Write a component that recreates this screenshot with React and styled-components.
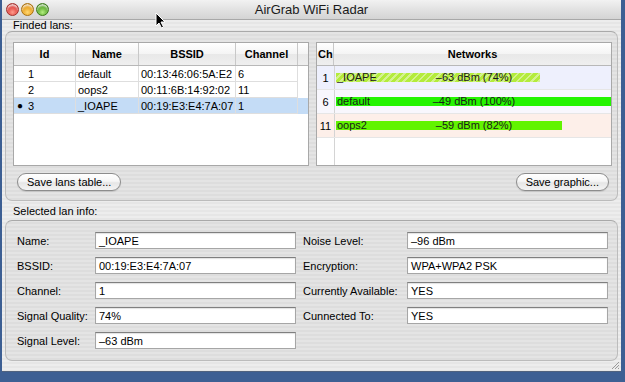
import React from "react";
import styled, { createGlobalStyle } from "styled-components";

const GlobalStyle = createGlobalStyle`
  html, body {
    margin: 0;
    padding: 0;
    background: #3d5f93;
  }
  body {
    font-family: "Liberation Sans", Arial, sans-serif;
    font-size: 11px;
    color: #000;
  }
`;

const Desktop = styled.div`
  width: 625px;
  height: 382px;
  padding-left: 2px;
  box-sizing: border-box;
  position: relative;
`;

const Window = styled.div`
  width: 619px;
  height: 372px;
  display: flex;
  flex-direction: column;
  background: repeating-linear-gradient(
    to bottom,
    #ededed 0px,
    #ededed 2px,
    #e6e6e6 2px,
    #e6e6e6 4px
  );
  border-bottom: 1px solid #50627e;
  box-sizing: border-box;
  position: relative;
`;

const TitleBar = styled.div`
  height: 20px;
  flex: none;
  display: flex;
  align-items: center;
  position: relative;
  background: linear-gradient(to bottom, #f2f2f2 0%, #e2e2e2 50%, #d4d4d4 100%);
  border-bottom: 1px solid #a8a8a8;
  box-sizing: border-box;
`;

const Lights = styled.div`
  display: flex;
  gap: 2px;
  padding-left: 4px;
`;

const Light = styled.span`
  width: 13px;
  height: 13px;
  border-radius: 50%;
  box-sizing: border-box;
  border: 1px solid ${(p) => p.$edge};
  background: radial-gradient(
    circle at 50% 75%,
    ${(p) => p.$glow} 0%,
    ${(p) => p.$color} 55%,
    ${(p) => p.$edge} 100%
  );
  box-shadow: inset 0 2px 2px rgba(255, 255, 255, 0.75);
`;

const Title = styled.div`
  position: absolute;
  left: 0;
  right: 0;
  text-align: center;
  font-size: 13px;
  color: #1a1a1a;
  pointer-events: none;
`;

const SectionLabel = styled.div`
  height: 11px;
  line-height: 11px;
  padding-left: 11px;
  margin-top: ${(p) => p.$top || 0}px;
  font-size: 11px;
`;

const GroupBox = styled.div`
  margin: ${(p) => p.$top || 0}px 3px 0 3px;
  height: ${(p) => p.$height}px;
  box-sizing: border-box;
  border: 1px solid #bcbcbc;
  border-top-color: #a9a9a9;
  border-radius: 7px;
  background: rgba(0, 0, 0, 0.035);
  padding: ${(p) => p.$pad};
  display: flex;
  flex-direction: column;
`;

const TablesRow = styled.div`
  display: flex;
  gap: 7px;
  height: 124px;
`;

const TableView = styled.div`
  width: 296px;
  height: 124px;
  box-sizing: border-box;
  border: 1px solid #a8a8a8;
  background: #fff;
  display: flex;
  flex-direction: column;
  overflow: hidden;
`;

const HeaderRow = styled.div`
  display: flex;
  height: 23px;
  flex: none;
  background: linear-gradient(to bottom, #ffffff 0%, #f4f4f4 50%, #e8e8e8 51%, #efefef 100%);
  border-bottom: 1px solid #b8b8b8;
  box-sizing: border-box;
`;

const HeaderCell = styled.div`
  width: ${(p) => (p.$w ? `${p.$w}px` : "auto")};
  flex: ${(p) => (p.$w ? "none" : "1")};
  display: flex;
  align-items: center;
  justify-content: ${(p) => p.$align || "center"};
  padding-left: ${(p) => p.$pl || 0}px;
  box-sizing: border-box;
  font-weight: bold;
  font-size: 11px;
  border-right: ${(p) => (p.$last ? "none" : "1px solid #c8c8c8")};
`;

const LanRow = styled.div`
  display: flex;
  height: 16px;
  background: ${(p) => (p.$selected ? "#c4dcf6" : "#fff")};
`;

const LanCell = styled.div`
  width: ${(p) => p.$w}px;
  flex: none;
  box-sizing: border-box;
  display: flex;
  align-items: center;
  padding-left: ${(p) => p.$pl || 2}px;
  border-right: 1px solid #dedede;
  border-bottom: 1px solid #dedede;
  white-space: nowrap;
  overflow: hidden;
`;

const Bullet = styled.span`
  width: 11px;
  font-size: 10px;
  visibility: ${(p) => (p.$on ? "visible" : "hidden")};
`;

const NetRow = styled.div`
  display: flex;
  height: 24px;
  background: ${(p) => p.$bg};
  border-bottom: 1px solid #e6e6e6;
  box-sizing: border-box;
`;

const ChCell = styled.div`
  width: 17px;
  flex: none;
  display: flex;
  align-items: center;
  justify-content: center;
  border-right: 1px solid #d4d4d4;
  font-size: 11px;
`;

const NetCell = styled.div`
  flex: 1;
  display: flex;
  align-items: center;
  padding-left: 1px;
`;

const Track = styled.div`
  width: 275px;
  height: 9px;
  display: grid;
  font-size: 11px;
  line-height: 9px;
`;

const Bar = styled.div`
  grid-area: 1 / 1;
  height: 9px;
  justify-self: start;
  background: ${(p) =>
    p.$hatched
      ? "repeating-linear-gradient(135deg, #b4ec3c 0px, #b4ec3c 3px, #d4f28e 3px, #d4f28e 5px)"
      : p.$color};
`;

const BarText = styled.div`
  grid-area: 1 / 1;
  display: grid;
  grid-template-columns: 1fr auto 1fr;
  align-items: center;
  color: #1a1a1a;
  padding-left: 1px;
  white-space: nowrap;
`;

const Filler = styled.div`
  flex: 1;
  display: flex;
`;

const FillerCh = styled.div`
  width: 17px;
  border-right: 1px solid #d4d4d4;
`;

const ButtonsRow = styled.div`
  display: flex;
  justify-content: space-between;
  padding: 0 3px 0 4px;
  margin-top: 7px;
`;

const Button = styled.div`
  height: 18px;
  box-sizing: border-box;
  padding: 0 9px;
  display: flex;
  align-items: center;
  border: 1px solid #8c8c8c;
  border-radius: 9px;
  background: linear-gradient(to bottom, #ffffff 0%, #f6f6f6 45%, #e6e6e6 55%, #f4f4f4 100%);
  box-shadow: 0 1px 1px rgba(0, 0, 0, 0.12);
  font-size: 11px;
`;

const Form = styled.div`
  display: grid;
  grid-template-columns: 279px 305px;
  column-gap: 7px;
  row-gap: 8px;
`;

const Field = styled.div`
  display: flex;
  align-items: center;
  height: 17px;
`;

const Label = styled.div`
  width: ${(p) => p.$w}px;
  flex: none;
  font-size: 11px;
  white-space: nowrap;
`;

const Input = styled.div`
  width: 201px;
  height: 17px;
  box-sizing: border-box;
  background: #fff;
  border: 1px solid #a6a6a6;
  border-top-color: #7f7f7f;
  box-shadow: inset 0 1px 1px rgba(0, 0, 0, 0.12);
  padding-left: 3px;
  display: flex;
  align-items: center;
  font-size: 11px;
`;

const BottomStrip = styled.div`
  flex: 1;
  display: flex;
  justify-content: flex-end;
  align-items: flex-end;
  padding: 0 1px 1px 0;
`;

const Cursor = styled.svg`
  position: absolute;
  left: 153px;
  top: 12px;
`;

const lans = [
  { id: 1, name: "default", bssid: "00:13:46:06:5A:E2", ch: 6 },
  { id: 2, name: "oops2", bssid: "00:11:6B:14:92:02", ch: 11 },
  { id: 3, name: "_IOAPE", bssid: "00:19:E3:E4:7A:07", ch: 1, selected: true },
];

const networks = [
  { ch: 1, name: "_IOAPE", dbm: -63, pct: 74, bg: "#eef0fd", hatched: true },
  { ch: 6, name: "default", dbm: -49, pct: 100, bg: "#f8f7fd", color: "#24f400" },
  { ch: 11, name: "oops2", dbm: -59, pct: 82, bg: "#fdefe9", color: "#62f400" },
];

const leftInfo = [
  ["Name:", "_IOAPE"],
  ["BSSID:", "00:19:E3:E4:7A:07"],
  ["Channel:", "1"],
  ["Signal Quality:", "74%"],
  ["Signal Level:", "\u201363 dBm"],
];

const rightInfo = [
  ["Noise Level:", "\u201396 dBm"],
  ["Encryption:", "WPA+WPA2 PSK"],
  ["Currently Available:", "YES"],
  ["Cunnected To:", "YES"],
];

const cols = [62, 63, 97, 62];

const App = () => {
  const rows = [];
  for (let i = 0; i < leftInfo.length; i++) {
    rows.push(
      <Field key={`l${i}`}>
        <Label $w={78}>{leftInfo[i][0]}</Label>
        <Input>{leftInfo[i][1]}</Input>
      </Field>
    );
    rows.push(
      rightInfo[i] ? (
        <Field key={`r${i}`}>
          <Label $w={104}>{rightInfo[i][0]}</Label>
          <Input>{rightInfo[i][1]}</Input>
        </Field>
      ) : (
        <div key={`r${i}`} />
      )
    );
  }

  return (
    <Desktop>
      <GlobalStyle />
      <Window>
        <TitleBar>
          <Lights>
            <Light $color="#e0443e" $glow="#ff9c8c" $edge="#a3302b" />
            <Light $color="#e8a01c" $glow="#ffd873" $edge="#a9700f" />
            <Light $color="#5aaa2a" $glow="#b4ee82" $edge="#3c7a1b" />
          </Lights>
          <Title>AirGrab WiFi Radar</Title>
        </TitleBar>

        <SectionLabel>Finded lans:</SectionLabel>
        <GroupBox $height={172} $pad="10px 5px 0 7px">
          <TablesRow>
            <TableView>
              <HeaderRow>
                <HeaderCell $w={cols[0]}>Id</HeaderCell>
                <HeaderCell $w={cols[1]}>Name</HeaderCell>
                <HeaderCell $w={cols[2]}>BSSID</HeaderCell>
                <HeaderCell $w={cols[3]}>Channel</HeaderCell>
                <HeaderCell $last />
              </HeaderRow>
              {lans.map((l) => (
                <LanRow key={l.id} $selected={l.selected}>
                  <LanCell $w={cols[0]} $pl={3}>
                    <Bullet $on={l.selected}>●</Bullet>
                    {l.id}
                  </LanCell>
                  <LanCell $w={cols[1]}>{l.name}</LanCell>
                  <LanCell $w={cols[2]}>{l.bssid}</LanCell>
                  <LanCell $w={cols[3]}>{l.ch}</LanCell>
                </LanRow>
              ))}
            </TableView>

            <TableView>
              <HeaderRow>
                <HeaderCell $w={17} $align="flex-start" $pl={1}>
                  Ch
                </HeaderCell>
                <HeaderCell $last>Networks</HeaderCell>
              </HeaderRow>
              {networks.map((n) => (
                <NetRow key={n.ch} $bg={n.bg}>
                  <ChCell>{n.ch}</ChCell>
                  <NetCell>
                    <Track>
                      <Bar
                        $hatched={n.hatched}
                        $color={n.color}
                        style={{ width: `${(n.pct / 100) * 275}px` }}
                      />
                      <BarText>
                        <span>{n.name}</span>
                        <span>
                          {"\u2013"}
                          {Math.abs(n.dbm)} dBm ({n.pct}%)
                        </span>
                        <span />
                      </BarText>
                    </Track>
                  </NetCell>
                </NetRow>
              ))}
              <Filler>
                <FillerCh />
              </Filler>
            </TableView>
          </TablesRow>
          <ButtonsRow>
            <Button>Save lans table...</Button>
            <Button>Save graphic...</Button>
          </ButtonsRow>
        </GroupBox>

        <SectionLabel $top={5}>Selected lan info:</SectionLabel>
        <GroupBox $top={3} $height={142} $pad="11px 9px 0 11px">
          <Form>{rows}</Form>
        </GroupBox>

        <BottomStrip>
          <svg width="9" height="9" viewBox="0 0 9 9">
            <path d="M8 1 L1 8 M8 4 L4 8 M8 7 L7 8" stroke="#9a9a9a" strokeWidth="1" />
          </svg>
        </BottomStrip>

        <Cursor width="11" height="17" viewBox="0 0 11 17">
          <path
            d="M1 1 L1 14 L4 11 L6.5 16 L8.5 15 L6 10 L10 10 Z"
            fill="#000"
            stroke="#fff"
            strokeWidth="1"
          />
        </Cursor>
      </Window>
    </Desktop>
  );
};

export default App;
